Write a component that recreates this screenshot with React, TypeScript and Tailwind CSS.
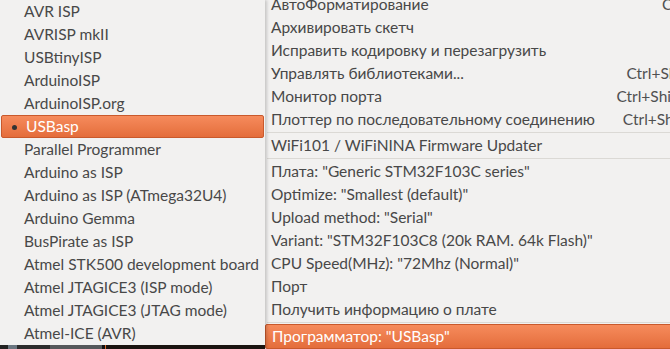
import React from "react";

const programmers = [
  "AVR ISP",
  "AVRISP mkII",
  "USBtinyISP",
  "ArduinoISP",
  "ArduinoISP.org",
  "USBasp",
  "Parallel Programmer",
  "Arduino as ISP",
  "Arduino as ISP (ATmega32U4)",
  "Arduino Gemma",
  "BusPirate as ISP",
  "Atmel STK500 development board",
  "Atmel JTAGICE3 (ISP mode)",
  "Atmel JTAGICE3 (JTAG mode)",
  "Atmel-ICE (AVR)",
];

type Entry =
  | { sep: true }
  | { label: string; shortcut?: string; active?: boolean; sep?: false };

const tools: Entry[] = [
  { label: "АвтоФорматирование", shortcut: "Ctrl+T" },
  { label: "Архивировать скетч" },
  { label: "Исправить кодировку и перезагрузить" },
  { label: "Управлять библиотеками...", shortcut: "Ctrl+Shift+I" },
  { label: "Монитор порта", shortcut: "Ctrl+Shift+M" },
  { label: "Плоттер по последовательному соединению", shortcut: "Ctrl+Shift+L" },
  { sep: true },
  { label: "WiFi101 / WiFiNINA Firmware Updater" },
  { sep: true },
  { label: 'Плата: "Generic STM32F103C series"' },
  { label: 'Optimize: "Smallest (default)"' },
  { label: 'Upload method: "Serial"' },
  { label: 'Variant: "STM32F103C8 (20k RAM. 64k Flash)"' },
  { label: 'CPU Speed(MHz): "72Mhz (Normal)"' },
  { label: "Порт" },
  { label: "Получить информацию о плате" },
  { sep: true },
  { label: 'Программатор: "USBasp"', active: true },
];

const highlight =
  "bg-gradient-to-b from-[#f68b5c] to-[#e46d3b] border border-[#c9592c] text-white";

function ProgrammerItem({ label, selected }: { label: string; selected: boolean }) {
  return (
    <div
      className={`relative flex h-[23px] shrink-0 items-center pl-6 ${
        selected ? `${highlight} mx-px rounded-[2px]` : "text-[#484848]"
      }`}
    >
      {selected && (
        <span className="absolute left-[10px] top-[9px] h-[5px] w-[5px] rounded-full bg-[#333]" />
      )}
      <span className="whitespace-nowrap">{label}</span>
    </div>
  );
}

function ToolItem({ entry }: { entry: Entry }) {
  if (entry.sep) {
    return (
      <div className="flex h-[3px] shrink-0 items-start pl-[2px]">
        <div className="mt-px w-full border-t border-[#dbd9d5]" />
      </div>
    );
  }
  return (
    <div
      className={`flex h-[23px] shrink-0 items-center justify-between pl-[6px] pr-[20px] ${
        entry.active ? `${highlight} h-[25px] rounded-[2px]` : "text-[#484848]"
      }`}
    >
      <span className="whitespace-nowrap">{entry.label}</span>
      {entry.shortcut && (
        <span className="whitespace-nowrap text-[#505050]">{entry.shortcut}</span>
      )}
    </div>
  );
}

export default function App() {
  return (
    <div
      className="flex h-[349px] w-[670px] overflow-hidden bg-[#f2f1f0] text-[15.5px] leading-none"
      style={{ fontFamily: "Lato, 'Open Sans', sans-serif" }}
    >
      {/* programmer submenu, overlapping the tools menu */}
      <div className="relative z-10 flex w-[265px] shrink-0 flex-col shadow-[2px_0_3px_rgba(0,0,0,0.18)]">
        <div className="flex flex-col bg-[#f2f1f0]">
          {programmers.map((p) => (
            <ProgrammerItem key={p} label={p} selected={p === "USBasp"} />
          ))}
        </div>
        {/* bit of desktop peeking out below */}
        <div className="flex flex-1 bg-[#1d1d1d]">
          <div className="w-[8px] bg-[#222]" />
          <div className="w-[9px] bg-[#6a7680]" />
          <div className="w-[33px] bg-[#2c2c2c]" />
          <div className="w-[52px] bg-[#55585a]" />
          <div className="w-[3px] bg-[#111]" />
          <div className="w-px bg-[#d96a2a]" />
          <div className="flex-1 bg-[#1a1410]" />
        </div>
      </div>

      {/* tools menu */}
      <div className="-mt-[7px] flex w-[460px] shrink-0 flex-col bg-[#f2f1f0]">
        {tools.map((t, i) => (
          <ToolItem key={i} entry={t} />
        ))}
      </div>
    </div>
  );
}
